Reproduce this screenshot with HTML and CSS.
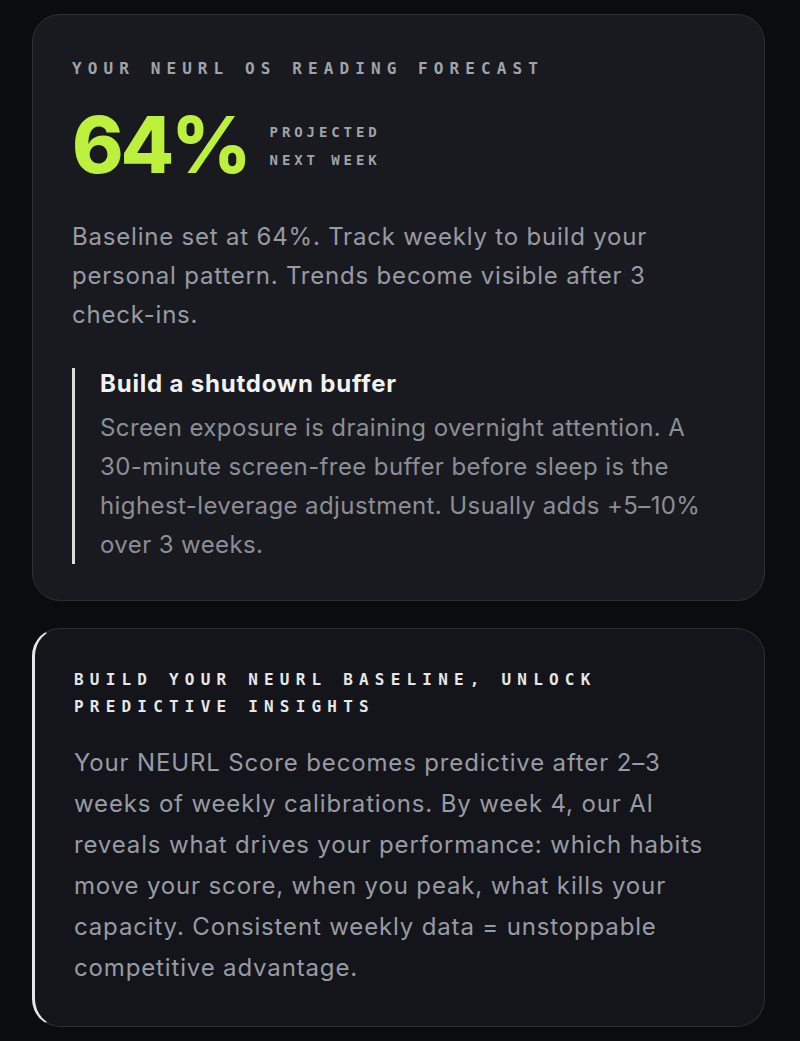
FILE: index.html
```html
<!DOCTYPE html>
<html lang="en">
<head>
<meta charset="utf-8">
<title>NEURL forecast</title>
<link rel="stylesheet" href="styles.css">
</head>
<body>
<main class="stack">
  <section class="card forecast">
    <div class="eyebrow">YOUR NEURL OS READING FORECAST</div>
    <div class="score-row">
      <div class="score">64%</div>
      <div class="score-label">PROJECTED<br>NEXT WEEK</div>
    </div>
    <p class="body">Baseline set at 64%. Track weekly to build your personal pattern. Trends become visible after 3 check-ins.</p>
    <div class="callout">
      <div class="callout-title">Build a shutdown buffer</div>
      <p class="callout-text">Screen exposure is draining overnight attention. A 30-minute screen-free buffer before sleep is the highest-leverage adjustment. Usually adds +5–10% over 3 weeks.</p>
    </div>
  </section>
  <section class="card baseline">
    <h2 class="heading">BUILD YOUR NEURL BASELINE, UNLOCK PREDICTIVE INSIGHTS</h2>
    <p class="body body-wide">Your NEURL Score becomes predictive after 2–3 weeks of weekly calibrations. By week 4, our AI reveals what drives your performance: which habits move your score, when you peak, what kills your capacity. Consistent weekly data = unstoppable competitive advantage.</p>
  </section>
</main>
</body>
</html>
```

FILE: styles.css
```css
html, body {
  margin: 0;
  padding: 0;
  background: #0b0c0f;
}
body {
  font-family: Inter, "Liberation Sans", sans-serif;
  color: #9b9ea6;
}
.stack {
  display: flex;
  flex-direction: column;
  gap: 27px;
  padding: 14px 35px 0 32px;
}
.card {
  background: #181a1f;
  border: 1.5px solid #2d2f35;
  border-radius: 28px;
  box-sizing: border-box;
}
.forecast {
  padding: 44px 40px 36px 39px;
  height: 587px;
}
.eyebrow {
  font-family: "DejaVu Sans Mono", monospace;
  font-size: 16px;
  font-weight: bold;
  letter-spacing: 6.1px;
  color: #a0a3aa;
  line-height: 20px;
}
.score-row {
  display: flex;
  align-items: center;
  gap: 21px;
  margin-top: 26px;
}
.score {
  font-size: 78px;
  font-weight: 800;
  letter-spacing: -3px;
  color: #bdf03c;
  line-height: 80px;
}
.score-label {
  font-family: "DejaVu Sans Mono", monospace;
  font-size: 14px;
  font-weight: bold;
  letter-spacing: 3.9px;
  color: #a0a3aa;
  line-height: 28px;
  margin-top: 2px;
}
.body {
  margin: 32px 0 0;
  font-size: 24px;
  letter-spacing: 0.8px;
  line-height: 39px;
  color: #989ba3;
}
.callout {
  margin-top: 34px;
  border-left: 3px solid #dcdcdc;
  padding: 0 0 0 25px;
}
.callout-title {
  font-size: 24px;
  font-weight: 700;
  letter-spacing: 0.8px;
  color: #f2f2f2;
  line-height: 32px;
}
.callout-text {
  margin: 8px 0 0;
  font-size: 24px;
  letter-spacing: 0.4px;
  line-height: 39px;
  color: #8b8e95;
}
.baseline {
  background: #13151a;
  border-left: 3px solid #e6e6e6;
  padding: 37px 40px 30px 39px;
  height: 399px;
}
.heading {
  margin: 0;
  font-family: "DejaVu Sans Mono", monospace;
  font-size: 16px;
  font-weight: bold;
  letter-spacing: 6.2px;
  line-height: 27px;
  color: #e6e6e6;
}
.body-wide {
  margin-top: 22px;
  line-height: 41px;
  letter-spacing: 0.85px;
}
```
